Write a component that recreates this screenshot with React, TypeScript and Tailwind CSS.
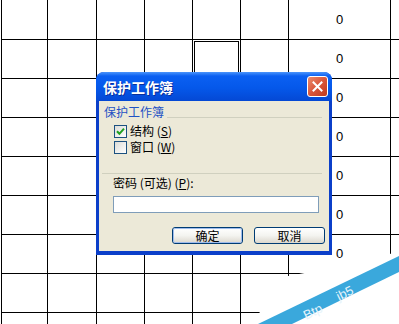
import React from 'react';

const colWidths = ['w-[46px]', 'w-[49px]', 'w-[48px]', 'w-[48px]', 'w-[48px]', 'w-[48px]', 'w-[102px]'];
const rowCount = 9;

const Checkbox = ({ checked }: { checked?: boolean }) => (
  <span className="flex h-[13px] w-[13px] shrink-0 items-center justify-center border border-[#1c5180] bg-gradient-to-br from-[#dcdcd7] to-white">
    {checked && (
      <svg width="9" height="9" viewBox="0 0 9 9">
        <path d="M1 4.2 L3.4 6.8 L8 1.6" fill="none" stroke="#21a121" strokeWidth="2" />
      </svg>
    )}
  </span>
);

const XpButton = ({ label, focused }: { label: string; focused?: boolean }) => (
  <button className="flex h-[17px] w-[71px] items-center justify-center rounded-[3px] border border-[#003c74] bg-gradient-to-b from-white via-[#f4f4f0] to-[#dcd8ce] p-0">
    <span
      className={`flex h-full w-full items-center justify-center rounded-[2px] text-[12px] leading-none text-black ${
        focused ? 'border border-[#9fbcec]' : ''
      }`}
    >
      {label}
    </span>
  </button>
);

export default function App() {
  return (
    <div className="relative h-[324px] w-[399px] overflow-hidden bg-white font-['Liberation_Sans','Noto_Sans_CJK_SC',sans-serif]">
      {/* Sheet grid */}
      <div className="ml-px border-l border-black">
        {Array.from({ length: rowCount }, (_, r) => (
          <div key={r} className={`flex border-b border-black ${r === 0 ? 'h-[40px]' : 'h-[39px]'}`}>
            {colWidths.map((w, c) => (
              <div key={c} className={`relative flex shrink-0 items-center justify-center border-r border-black ${w}`}>
                {c === 6 && r < 7 && <span className="text-[13px] text-black">0</span>}
                {r === 1 && c === 4 && (
                  <div className="absolute left-px top-px right-px bottom-px border border-black" />
                )}
              </div>
            ))}
            <div className="flex-1" />
          </div>
        ))}
      </div>

      {/* Protect workbook dialog */}
      <div className="absolute left-[96px] top-[72px] flex h-[183px] w-[236px] flex-col overflow-hidden rounded-t-[8px] bg-[#0b3fc9] font-['Noto_Sans_CJK_SC',sans-serif]">
        <div className="flex h-[29px] shrink-0 items-center justify-between bg-[linear-gradient(to_bottom,#4b95fb_0%,#0b60f2_14%,#0558ea_55%,#0448d4_100%)] pl-[7px] pr-[4px]">
          <span className="text-[14px] font-bold leading-none text-white [text-shadow:1px_1px_0_#0a2f9c]">保护工作簿</span>
          <span className="flex h-[21px] w-[21px] items-center justify-center rounded-[3px] border border-white bg-gradient-to-br from-[#ea8a6c] via-[#d9553a] to-[#c03a1c]">
            <svg width="11" height="11" viewBox="0 0 11 11">
              <path d="M1.5 1.5 L9.5 9.5 M9.5 1.5 L1.5 9.5" stroke="white" strokeWidth="2" strokeLinecap="square" />
            </svg>
          </span>
        </div>

        <div className="mx-[3px] mb-[4px] flex flex-1 flex-col bg-[#ece9d8] text-[12px] leading-none text-black">
          {/* Group header */}
          <div className="mt-[5px] flex h-[14px] items-start pl-[5px] pr-[7px]">
            <span className="text-[#1f52c4]">保护工作簿</span>
            <div className="ml-[3px] mt-[11px] h-px flex-1 bg-[#d0d0bf]" />
          </div>

          <div className="mt-[4px] flex h-[14px] items-center gap-[3px] pl-[15px]">
            <Checkbox checked />
            <span>
              结构 (<u>S</u>)
            </span>
          </div>
          <div className="mt-[2px] flex h-[14px] items-center gap-[3px] pl-[15px]">
            <Checkbox />
            <span>
              窗口 (<u>W</u>)
            </span>
          </div>

          <div className="ml-[3px] mr-[7px] mt-[19px] h-px bg-[#d0d0bf]" />

          <div className="mt-[2px] flex h-[14px] items-center pl-[14px]">
            <span>
              密码 (可选) (<u>P</u>):
            </span>
          </div>

          <div className="ml-[14px] mt-[6px] h-[17px] w-[206px] border border-[#7f9db9] bg-white" />

          <div className="mt-[14px] flex justify-end gap-[11px] pr-[4px]">
            <XpButton label="确定" focused />
            <XpButton label="取消" />
          </div>
        </div>
      </div>

      {/* Corner watermark */}
      <svg className="absolute left-[240px] top-[240px]" width="159" height="84" viewBox="0 0 159 84">
        <polygon points="10,84 20,72 48,36 70,32 150,14 159,10 159,84" fill="white" />
        <polygon points="18,84 159,16 159,32 52,84" fill="#3aa8dc" />
        <text x="66" y="80" transform="rotate(-26 66 80)" fill="#e6f4fb" fontSize="13" fontFamily="Liberation Sans, sans-serif">
          Btp
        </text>
        <text x="99" y="61" transform="rotate(-26 99 61)" fill="#e6f4fb" fontSize="13" fontFamily="Liberation Sans, sans-serif">
          jb5
        </text>
      </svg>
    </div>
  );
}
